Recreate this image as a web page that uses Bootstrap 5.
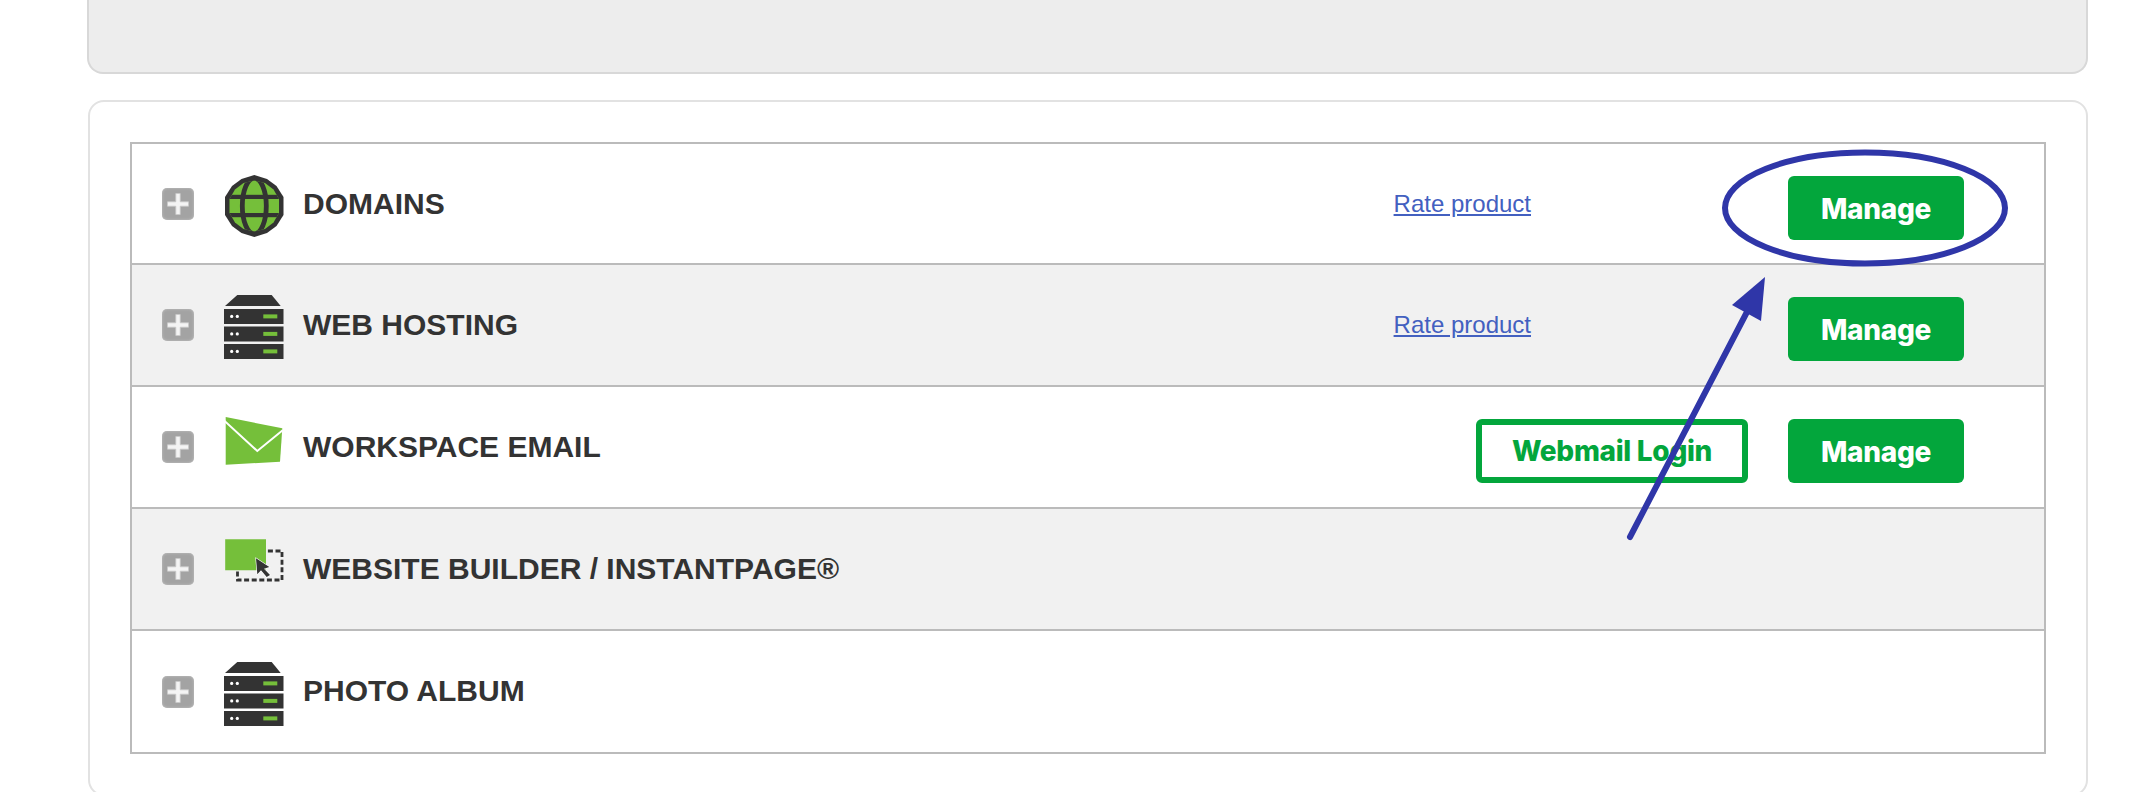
<!DOCTYPE html>
<html lang="en">
<head>
<meta charset="utf-8">
<title>Products</title>
<link href="https://cdn.jsdelivr.net/npm/bootstrap@5.3.0/dist/css/bootstrap.min.css" rel="stylesheet">
<style>
html,body{height:792px;overflow:hidden;background:#fff;}
body{font-family:"Liberation Sans",Arial,sans-serif;position:relative;}
.page-wrap{width:2000px;margin-left:88px;}
.top-panel{height:74px;margin:0 0 26px -1px;width:2001px;background:#ededed;border:2px solid #d8d8d8;border-top:0;border-radius:0 0 16px 16px;}
.main-panel{border:2px solid #e2e2e2;border-radius:16px;padding:40px;background:#fff;}
.prod-table{border:2px solid #bbb;}
.prod-row{height:122px;border-bottom:2px solid #bbb;padding:0 80px 0 30px;gap:30px;}
.prod-row:first-child{height:121px;}
.prod-row:last-child{border-bottom:0;height:121px;}
.prod-row.shaded{background:#f1f1f1;}
.plus-box{width:32px;height:32px;border-radius:5px;background:#a3a3a3;box-shadow:inset 0 0 3px #c4c4c4;flex:none;}
.plus-box svg{display:block;}
.prod-icon{width:60px;height:70px;flex:none;display:block;}
.prod-name{font-size:30px;font-weight:700;color:#333;margin-left:-11px;padding-bottom:1px;line-height:1;}
.prod-row:first-child .prod-name{padding-bottom:0;}
.rate-link{font-size:24px;color:#4360c0;margin-right:227px;}
.act-btn{font-family:Inter,"Liberation Sans",sans-serif;font-weight:800;font-size:28px;letter-spacing:-.3px;height:64px;padding:2px 0 0;border-radius:6px;line-height:1;margin-top:8px;display:flex;align-items:center;justify-content:center;}
.act-solid{width:176px;background:#03a63c;border:0;color:#fff;}
.act-solid:hover{background:#03a63c;color:#fff;}
.act-line{width:272px;background:#fff;border:6px solid #03a63c;color:#03a63c;margin-right:10px;padding-top:0;}
.act-line:hover{background:#fff;color:#03a63c;}
.annot{position:absolute;left:0;top:0;pointer-events:none;}
</style>
</head>
<body>
<svg width="0" height="0" class="d-block position-absolute">
<defs>
<g id="server">
<polygon points="1,16 13.3,5 47.7,5 56.7,16" fill="#333"/>
<rect x="0" y="19" width="59.5" height="15" fill="#333"/>
<rect x="0" y="36.5" width="59.5" height="15" fill="#333"/>
<rect x="0" y="54" width="59.5" height="15" fill="#333"/>
<g fill="#fff"><circle cx="7.7" cy="26.4" r="1.6"/><circle cx="13.3" cy="26.4" r="1.6"/><circle cx="7.7" cy="43.9" r="1.6"/><circle cx="13.3" cy="43.9" r="1.6"/><circle cx="7.7" cy="61.4" r="1.6"/><circle cx="13.3" cy="61.4" r="1.6"/></g>
<g fill="#75bf3a"><rect x="39.3" y="24.4" width="14" height="4"/><rect x="39.3" y="41.9" width="14" height="4"/><rect x="39.3" y="59.4" width="14" height="4"/></g>
</g>
<g id="plus"><path d="M13.8 5.5h4.4v8.3h8.3v4.4h-8.3v8.3h-4.4v-8.3H5.5v-4.4h8.3z" fill="#f4f4f4" stroke="#c9c9c9" stroke-width=".8"/></g>
</defs>
</svg>
<div class="page-wrap">
<div class="top-panel"></div>
<div class="main-panel">
<div class="prod-table">

<div class="prod-row d-flex align-items-center">
<span class="plus-box"><svg width="32" height="32" viewBox="0 0 32 32"><use href="#plus"/></svg></span>
<svg class="prod-icon" viewBox="0 0 60 70">
<defs><clipPath id="gl"><polygon points="30.3,11.5 41,14 49.5,20.5 55,30 55,44 49.5,53.5 41,60 30.3,62.5 19.5,60 11,53.5 5.5,44 5.5,30 11,20.5 19.5,14"/></clipPath></defs>
<polygon points="30.3,6 43,10 52.5,17 59.5,28 59.5,46 52.5,57 43,64 30.3,68 17.5,64 8,57 1,46 1,28 8,17 17.5,10" fill="#333"/>
<g clip-path="url(#gl)"><rect x="0" y="0" width="60" height="70" fill="#75bf3a"/>
<ellipse cx="30.3" cy="37" rx="12" ry="28" fill="none" stroke="#333" stroke-width="4.8"/>
<rect x="0" y="25.8" width="60" height="4.2" fill="#333"/><rect x="0" y="44" width="60" height="4.2" fill="#333"/></g>
</svg>
<span class="prod-name flex-grow-1">DOMAINS</span>
<a class="rate-link" href="#">Rate product</a>
<a class="btn act-btn act-solid" href="#">Manage</a>
</div>

<div class="prod-row shaded d-flex align-items-center">
<span class="plus-box"><svg width="32" height="32" viewBox="0 0 32 32"><use href="#plus"/></svg></span>
<svg class="prod-icon" viewBox="0 0 60 70"><use href="#server"/></svg>
<span class="prod-name flex-grow-1">WEB HOSTING</span>
<a class="rate-link" href="#">Rate product</a>
<a class="btn act-btn act-solid" href="#">Manage</a>
</div>

<div class="prod-row d-flex align-items-center">
<span class="plus-box"><svg width="32" height="32" viewBox="0 0 32 32"><use href="#plus"/></svg></span>
<svg class="prod-icon" viewBox="0 0 60 70">
<polygon points="1.7,5 58.3,16.3 56,49.7 1.7,52.7" fill="#75bf3a"/>
<polyline points="0,8.5 33.3,39 58.7,18.3" fill="none" stroke="#fff" stroke-width="2"/>
</svg>
<span class="prod-name flex-grow-1">WORKSPACE EMAIL</span>
<a class="btn act-btn act-line" href="#">Webmail Login</a>
<a class="btn act-btn act-solid" href="#">Manage</a>
</div>

<div class="prod-row shaded d-flex align-items-center">
<span class="plus-box"><svg width="32" height="32" viewBox="0 0 32 32"><use href="#plus"/></svg></span>
<svg class="prod-icon" viewBox="0 0 60 70">
<rect x="13.5" y="17" width="44.5" height="29" fill="none" stroke="#333" stroke-width="2.8" stroke-dasharray="5 2.6"/>
<polygon points="1.2,5.3 42,5.3 42,36.3 1.2,36.3" fill="#75bf3a"/>
<polygon points="32,24.3 45.3,33 40,34.7 46,41 42.7,43 37,36.3 33.3,40.3" fill="#333" stroke="#fff" stroke-width="1.2" paint-order="stroke"/>
</svg>
<span class="prod-name flex-grow-1">WEBSITE BUILDER / INSTANTPAGE®</span>
</div>

<div class="prod-row d-flex align-items-center">
<span class="plus-box"><svg width="32" height="32" viewBox="0 0 32 32"><use href="#plus"/></svg></span>
<svg class="prod-icon" viewBox="0 0 60 70"><use href="#server"/></svg>
<span class="prod-name flex-grow-1">PHOTO ALBUM</span>
</div>

</div>
</div>
</div>
<svg class="annot" width="2154" height="792" viewBox="0 0 2154 792">
<ellipse cx="1865" cy="208" rx="140" ry="55.5" fill="none" stroke="#2f36a8" stroke-width="6"/>
<line x1="1630" y1="537" x2="1748" y2="310" stroke="#2f36a8" stroke-width="6" stroke-linecap="round"/>
<polygon points="1765,277 1732,305 1761,321" fill="#2f36a8"/>
</svg>
</body>
</html>
